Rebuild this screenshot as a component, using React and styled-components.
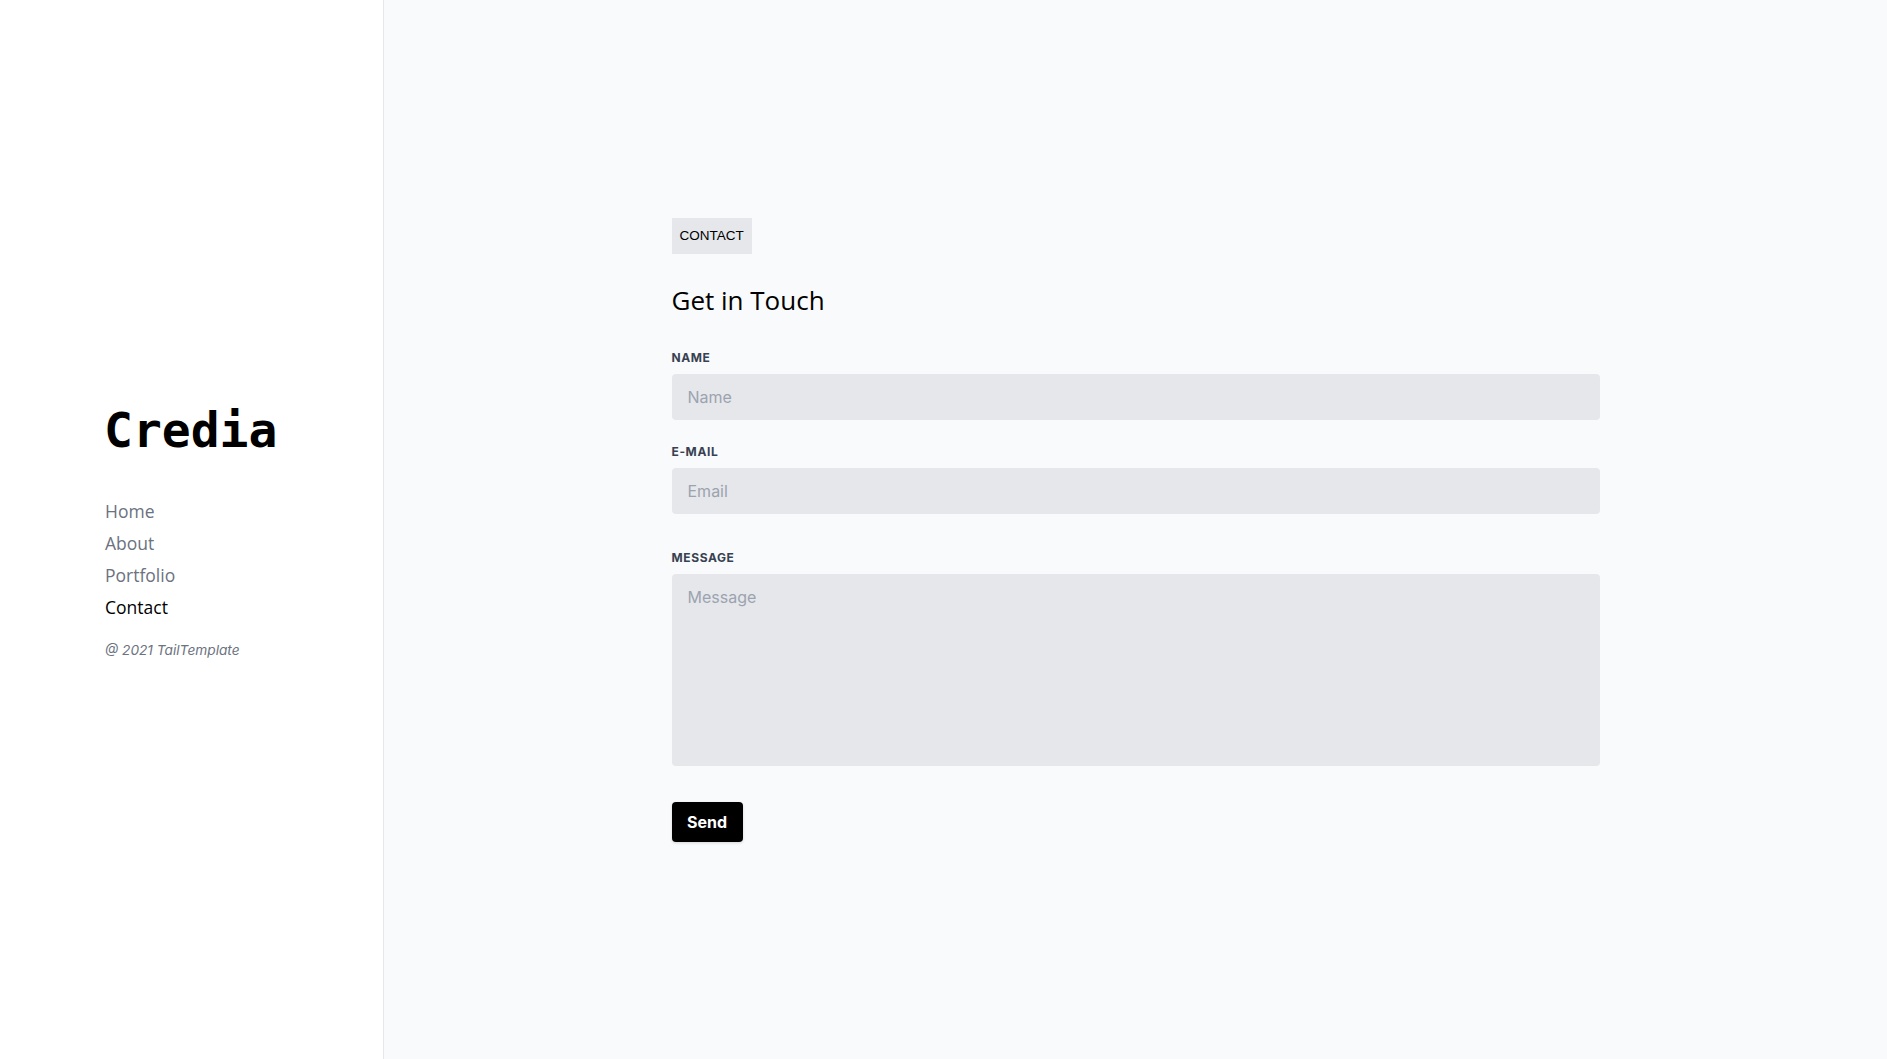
import React from "react";
import styled, { createGlobalStyle } from "styled-components";

const Global = createGlobalStyle`
  * { box-sizing: border-box; }
  html, body { margin: 0; padding: 0; }
  body { font-family: Inter, "Liberation Sans", sans-serif; background: #f9fafb; }
`;

const Layout = styled.div`
  display: flex;
  min-height: 1059px;
`;

const Sidebar = styled.aside`
  width: 384px;
  flex-shrink: 0;
  background: #ffffff;
  border-right: 1px solid #e5e7eb;
  display: flex;
  flex-direction: column;
  justify-content: center;
  padding: 7px 0 0 105px;
`;

const Logo = styled.h1`
  margin: 0 0 0 -1px;
  font-family: "DejaVu Sans Mono", "Liberation Mono", monospace;
  font-weight: 700;
  font-size: 48px;
  line-height: 48px;
  color: #000;
`;

const Nav = styled.ul`
  list-style: none;
  margin: 45px 0 0;
  padding: 0;
  display: flex;
  flex-direction: column;
  gap: 8px;
`;

const NavItem = styled.li`
  font-family: "Open Sans", sans-serif;
  font-size: 17.5px;
  line-height: 24px;
  font-weight: 500;
  color: ${(p) => (p.$active ? "#000000" : "#6b7280")};
`;

const Copyright = styled.p`
  margin: 21px 0 0;
  font-family: Inter, sans-serif;
  font-style: italic;
  font-size: 13.7px;
  line-height: 20px;
  color: #6b7280;
`;

const Main = styled.main`
  flex: 1;
  background: #f9fafb;
  display: flex;
  align-items: center;
  justify-content: center;
`;

const Content = styled.div`
  width: 928px;
  display: flex;
  flex-direction: column;
  align-items: flex-start;
`;

const Badge = styled.span`
  background: #e5e7eb;
  padding: 8px;
  font-family: "Liberation Sans", Arial, sans-serif;
  font-size: 13.5px;
  line-height: 20px;
  color: #000;
`;

const Heading = styled.h2`
  margin: 30px 0 34px;
  font-family: "Open Sans", sans-serif;
  font-weight: 500;
  font-size: 26px;
  line-height: 32px;
  color: #000;
`;

const Form = styled.form`
  width: 100%;
  display: flex;
  flex-direction: column;
  align-items: flex-start;
`;

const Field = styled.div`
  width: 100%;
  margin-bottom: ${(p) => p.$gap || 0}px;
`;

const Label = styled.label`
  display: block;
  margin-bottom: 8px;
  font-family: Inter, sans-serif;
  font-size: 12px;
  line-height: 16px;
  font-weight: 700;
  letter-spacing: 0.05em;
  text-transform: uppercase;
  color: #374151;
`;

const Input = styled.input`
  display: block;
  width: 100%;
  height: 46px;
  border: none;
  border-radius: 4px;
  background: #e5e7eb;
  padding: 11px 16px;
  font-family: Inter, sans-serif;
  font-size: 16px;
  line-height: 24px;
  color: #111827;
  outline: none;
  &::placeholder { color: #9ca3af; }
`;

const TextArea = styled.textarea`
  display: block;
  width: 100%;
  height: 192px;
  border: none;
  border-radius: 4px;
  background: #e5e7eb;
  padding: 11px 16px;
  font-family: Inter, sans-serif;
  font-size: 16px;
  line-height: 24px;
  resize: none;
  outline: none;
  &::placeholder { color: #9ca3af; }
`;

const Button = styled.button`
  height: 40px;
  padding: 0 15.5px;
  border: none;
  border-radius: 4px;
  background: #000;
  color: #fff;
  font-family: Inter, sans-serif;
  font-weight: 700;
  font-size: 16px;
  box-shadow: 0 1px 3px rgba(0, 0, 0, 0.15);
  cursor: pointer;
`;

const links = ["Home", "About", "Portfolio", "Contact"];

export default function App() {
  return (
    <>
      <Global />
      <Layout>
        <Sidebar>
          <Logo>Credia</Logo>
          <Nav>
            {links.map((l) => (
              <NavItem key={l} $active={l === "Contact"}>
                {l}
              </NavItem>
            ))}
          </Nav>
          <Copyright>@ 2021 TailTemplate</Copyright>
        </Sidebar>
        <Main>
          <Content>
            <Badge>CONTACT</Badge>
            <Heading>Get in Touch</Heading>
            <Form onSubmit={(e) => e.preventDefault()}>
              <Field $gap={24}>
                <Label>Name</Label>
                <Input placeholder="Name" />
              </Field>
              <Field $gap={36}>
                <Label>E-mail</Label>
                <Input placeholder="Email" />
              </Field>
              <Field $gap={36}>
                <Label>Message</Label>
                <TextArea placeholder="Message" />
              </Field>
              <Button type="submit">Send</Button>
            </Form>
          </Content>
        </Main>
      </Layout>
    </>
  );
}
